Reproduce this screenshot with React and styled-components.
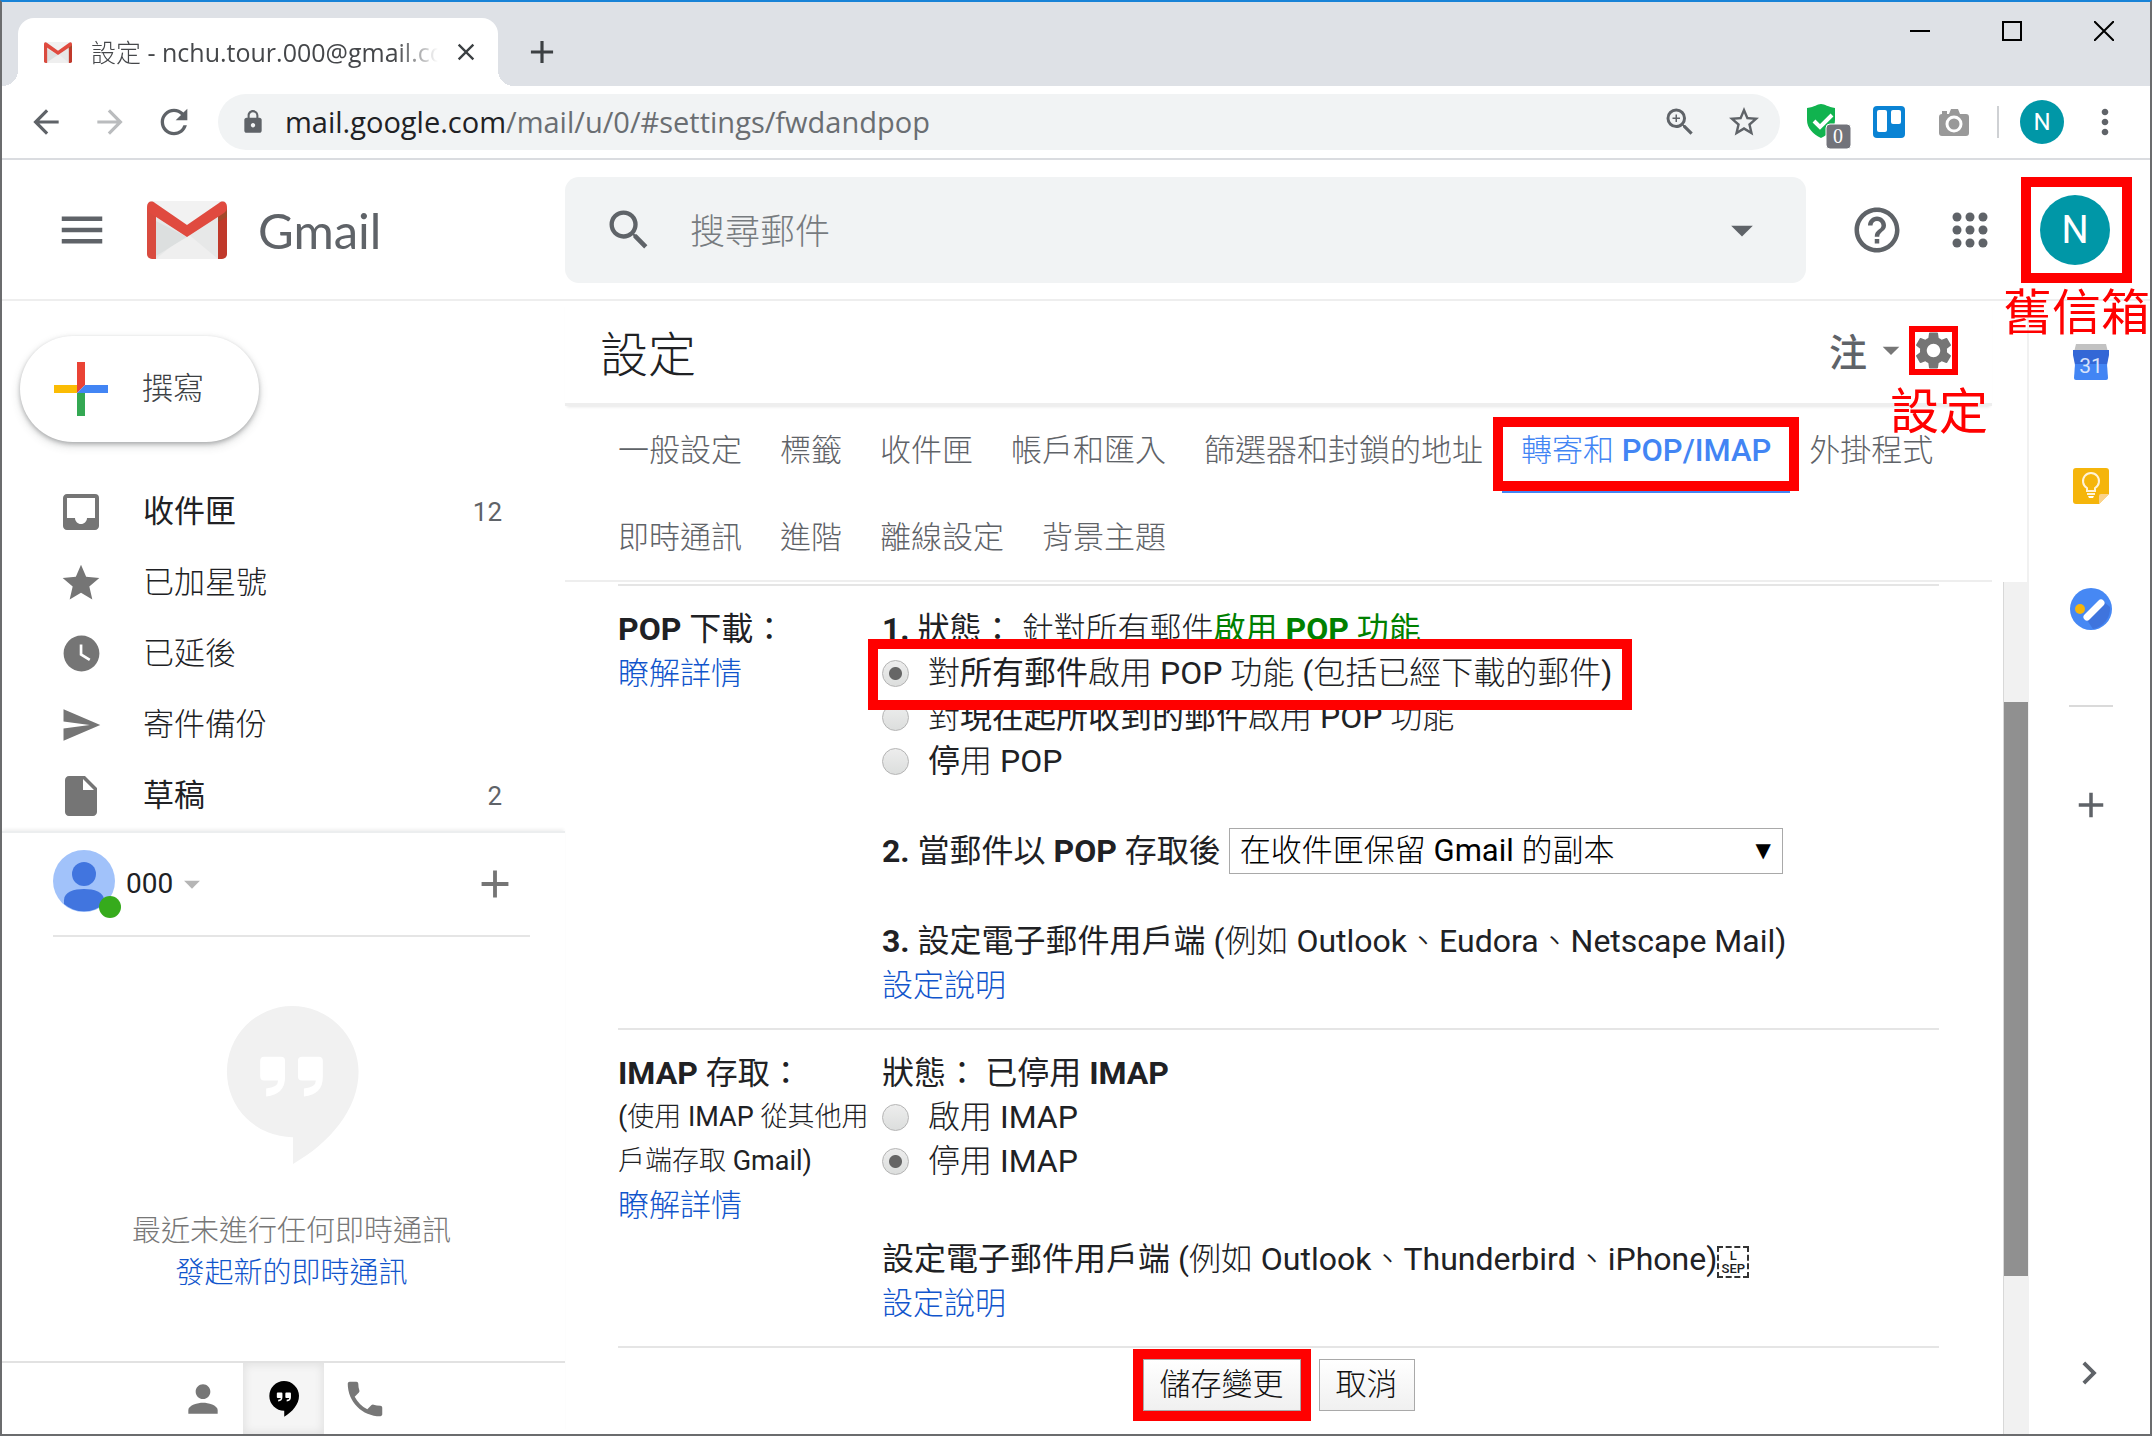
import React, { useState } from 'react';
import styled, { createGlobalStyle, css } from 'styled-components';
import {
  MdAdd,
  MdArrowBack,
  MdArrowDropDown,
  MdArrowForward,
  MdChevronRight,
  MdClose,
  MdHelpOutline,
  MdInbox,
  MdInsertDriveFile,
  MdLock,
  MdMenu,
  MdMoreVert,
  MdPerson,
  MdPhone,
  MdRefresh,
  MdSearch,
  MdSend,
  MdSettings,
  MdStar,
  MdStarBorder,
  MdWatchLater,
  MdZoomIn,
} from 'react-icons/md';

const CJK = "'Noto Sans CJK TC Light', 'Noto Sans CJK TC', sans-serif";

const GlobalStyle = createGlobalStyle`
  *, *::before, *::after {
    box-sizing: border-box;
  }

  body {
    margin: 0;
    background: #fff;
    color: #202124;
    font-family: Roboto, ${CJK};
    font-size: 31px;
    line-height: 44px;
  }

  button, input, select {
    font: inherit;
    color: inherit;
    margin: 0;
  }

  a {
    color: #1155cc;
    text-decoration: none;
  }

  svg {
    display: block;
    flex: none;
  }
`;

const Window = styled.div`
  display: flex;
  flex-direction: column;
  min-height: 100vh;
  border: 2px solid #6b6c6e;
  border-top-color: #1883d7;
  overflow: hidden;
`;

const PlainButton = styled.button`
  display: flex;
  align-items: center;
  justify-content: center;
  padding: 0;
  border: 0;
  background: none;
  color: #5f6368;
  cursor: pointer;
`;

/* ---------- browser ---------- */

const TabStrip = styled.div`
  display: flex;
  align-items: flex-end;
  height: 84px;
  padding-left: 16px;
  background: #dee1e6;
`;

const BrowserTab = styled.div`
  position: relative;
  display: flex;
  align-items: center;
  width: 480px;
  height: 68px;
  padding: 0 18px 0 26px;
  border-radius: 16px 16px 0 0;
  background: #fff;

  &::before,
  &::after {
    content: '';
    position: absolute;
    bottom: 0;
    width: 16px;
    height: 16px;
  }

  &::before {
    left: -16px;
    background: radial-gradient(circle at 0 0, transparent 16px, #fff 16px);
  }

  &::after {
    right: -16px;
    background: radial-gradient(circle at 100% 0, transparent 16px, #fff 16px);
  }
`;

const TabTitle = styled.span`
  flex: 1;
  margin: 0 14px 0 19px;
  overflow: hidden;
  white-space: nowrap;
  font-family: 'Open Sans', ${CJK};
  font-size: 25px;
  color: #45474a;
  mask-image: linear-gradient(90deg, #000 88%, transparent);
`;

const NewTab = styled(PlainButton)`
  width: 56px;
  height: 68px;
  margin-left: 16px;
  color: #3c4043;
`;

const WindowControls = styled.div`
  display: flex;
  align-self: flex-start;
  margin-left: auto;
`;

const WindowButton = styled(PlainButton)`
  width: 92px;
  height: 58px;
`;

const Toolbar = styled.div`
  display: flex;
  align-items: center;
  height: 74px;
  padding: 0 4px 0 12px;
  border-bottom: 2px solid #dadce0;
`;

const ToolButton = styled(PlainButton)`
  width: ${(props) => props.$width || 64}px;
  height: 56px;
  color: ${(props) => (props.$faded ? '#babcbe' : '#5f6368')};
`;

const Omnibox = styled.div`
  display: flex;
  flex: 1;
  align-items: center;
  height: 56px;
  margin: 0 11px 0 12px;
  padding: 0 4px 0 22px;
  border-radius: 28px;
  background: #f1f3f4;
  color: #5f6368;
`;

const Address = styled.span`
  flex: 1;
  margin-left: 19px;
  font-family: 'Open Sans', sans-serif;
  font-size: 29px;
  color: #6a6e72;

  b {
    font-weight: 400;
    color: #202124;
  }
`;

const ToolDivider = styled.span`
  width: 2px;
  height: 32px;
  margin: 0 21px 0 11px;
  background: #cfd1d4;
`;

const Avatar = styled.span`
  display: flex;
  align-items: center;
  justify-content: center;
  width: ${(props) => props.$size}px;
  height: ${(props) => props.$size}px;
  border-radius: 50%;
  background: #0097a7;
  color: #fff;
  font-size: ${(props) => (props.$size > 50 ? 38 : 24)}px;
`;

/* ---------- mail header ---------- */

const Header = styled.header`
  display: flex;
  align-items: center;
  height: 141px;
  border-bottom: 2px solid #eee;
`;

const Brand = styled.div`
  display: flex;
  align-items: center;
  width: 563px;
  padding-left: 50px;
`;

const BrandName = styled.span`
  margin-left: 31px;
  font-family: Lato, sans-serif;
  font-size: 49px;
  color: #5f6368;
`;

const MenuButton = styled(PlainButton)`
  width: 60px;
  height: 60px;
  margin-right: 35px;
`;

const Search = styled.form`
  display: flex;
  flex: 1;
  align-items: center;
  height: 106px;
  padding: 0 38px;
  border-radius: 14px;
  background: #f1f3f4;
`;

const SearchInput = styled.input`
  flex: 1;
  min-width: 0;
  margin-left: 35px;
  padding: 6px 0 0;
  border: 0;
  outline: 0;
  background: none;
  font-size: 35px;

  &::placeholder {
    color: #777b7f;
    opacity: 1;
  }
`;

const HeaderActions = styled.div`
  display: flex;
  align-items: center;
  gap: 48px;
  padding: 0 40px 0 44px;

  > :last-child {
    margin-left: 4px;
  }
`;

/* ---------- red call-outs ---------- */

const Marked = styled.div`
  position: relative;

  &::after {
    content: '';
    position: absolute;
    z-index: 2;
    inset: ${(props) => props.$inset};
    border: ${(props) => props.$line || 10}px solid #f00;
    pointer-events: none;
  }
`;

const MarkLabel = styled.span`
  position: absolute;
  z-index: 3;
  top: ${(props) => props.$top}px;
  right: ${(props) => props.$right}px;
  color: #f00;
  font-family: 'Noto Sans CJK TC', sans-serif;
  font-size: 49px;
  line-height: 50px;
  white-space: nowrap;
`;

/* ---------- sidebar ---------- */

const Body = styled.div`
  display: flex;
  flex: 1;
`;

const Sidebar = styled.aside`
  display: flex;
  flex-direction: column;
  width: 563px;
`;

const Compose = styled.button`
  display: flex;
  align-items: center;
  align-self: flex-start;
  gap: 34px;
  height: 106px;
  margin: 35px 0 34px 18px;
  padding: 0 55px 0 34px;
  border: 0;
  border-radius: 53px;
  background: #fff;
  color: #3c4043;
  box-shadow: 0 2px 4px rgba(60, 64, 67, 0.35), 0 4px 8px 1px rgba(60, 64, 67, 0.15);
`;

const FolderLink = styled.a`
  display: flex;
  align-items: center;
  height: 71px;
  padding: 0 63px 0 55px;
  color: #202124;
  font-family: Roboto, ${(props) => (props.$unread ? "'Noto Sans CJK TC', sans-serif" : CJK)};
`;

const FolderIcon = styled.span`
  display: flex;
  justify-content: center;
  width: 48px;
  margin-right: 38px;
  color: #757575;
`;

const FolderCount = styled.span`
  margin-left: auto;
  font-size: 26px;
  color: #5f6368;
`;

const Chat = styled.section`
  display: flex;
  flex: 1;
  flex-direction: column;
  border-top: 2px solid #eceeef;
  box-shadow: 0 -3px 3px -1px rgba(0, 0, 0, 0.06);
`;

const ChatHeader = styled.div`
  display: flex;
  align-items: center;
  height: 104px;
  margin: 0 35px 0 51px;
  padding-right: 12px;
  border-bottom: 2px solid #e5e5e5;
  font-size: 28px;
`;

const AddChat = styled(PlainButton)`
  margin-left: auto;
  color: #757575;
`;

const ChatAvatar = styled.span`
  position: relative;
  margin: 0 11px 6px 0;

  &::after {
    content: '';
    position: absolute;
    right: -6px;
    bottom: -6px;
    width: 22px;
    height: 22px;
    border-radius: 50%;
    background: #36ab1c;
  }
`;

const ChatEmpty = styled.div`
  display: flex;
  flex: 1;
  flex-direction: column;
  align-items: center;
  padding: 69px 0 0 16px;
  font-size: 29px;
  line-height: 42px;
  color: #777;

  svg {
    margin-bottom: 45px;
  }
`;

const ChatTabs = styled.div`
  display: flex;
  height: 73px;
  padding-left: 160px;
  border-top: 2px solid #e2e2e2;
`;

const ChatTab = styled(PlainButton)`
  width: 81px;
  color: #777;
  ${(props) =>
    props.$active &&
    css`
      background: #f5f5f5;
      box-shadow: inset 0 0 8px 2px rgba(0, 0, 0, 0.08);
      color: #000;
    `}
`;

/* ---------- settings ---------- */

const Main = styled.main`
  display: flex;
  flex: 1;
  flex-direction: column;
  min-width: 0;
`;

const MainTop = styled.div`
  padding-right: 35px;
  border-right: 2px solid #f1f1f1;
`;

const TitleBar = styled.div`
  display: flex;
  align-items: center;
  height: 105px;
  padding: 0 36px 4px 35px;
  border-bottom: 3px solid #eee;
  box-shadow: 0 3px 3px -2px rgba(0, 0, 0, 0.1);
`;

const Title = styled.h1`
  flex: 1;
  margin: 0;
  padding-top: 12px;
  font-size: 48px;
  font-weight: 400;
  line-height: 60px;
`;

const InputTool = styled(PlainButton)`
  font-family: 'Noto Sans CJK TC', sans-serif;
  font-size: 38px;
  font-weight: 500;

  svg {
    margin-left: 4px;
    color: #777;
  }
`;

const Tabs = styled.nav`
  display: flex;
  flex-wrap: wrap;
  padding-left: 34px;
  border-bottom: 2px solid #eee;
`;

const TabLink = styled.a`
  display: flex;
  align-items: center;
  height: 87px;
  padding: 6px 19px 0;
  border-bottom: 3px solid ${(props) => (props.$active ? '#4285f4' : 'transparent')};
  color: ${(props) => (props.$active ? '#4285f4' : '#5f6368')};
  font-weight: ${(props) => (props.$active ? 500 : 400)};
  white-space: pre;
`;

const Scroller = styled.div`
  display: flex;
  flex: 1;
`;

const ScrollTrack = styled.div`
  width: 26px;
  border-left: 1px solid #d8d8d8;
  background: #f1f1f1;
`;

const ScrollThumb = styled.div`
  width: 24px;
  height: 574px;
  margin-top: 120px;
  background: #909090;
`;

const Form = styled.form`
  flex: 1;
  padding: 2px 64px 0 53px;
  font-size: 32px;

  a {
    font-size: 31px;
  }
`;

const Section = styled.section`
  display: grid;
  grid-template-columns: 264px 1fr;
  padding: 21px 0 20px;
  border-top: 2px solid #e5e5e5;
`;

const Small = styled.div`
  font-size: 27px;
  white-space: nowrap;
`;

const Group = styled.div`
  margin-top: ${(props) => props.$gap || 0}px;
`;

const Strong = styled.strong`
  font-weight: 700;
  line-height: 1;
  color: ${(props) => props.color || 'inherit'};
`;

/* regular-weight Chinese beside the light default */
const Han = styled.span`
  font-family: 'Noto Sans CJK TC', sans-serif;
  font-weight: 400;
  line-height: 1;
`;

const RadioRow = styled.label`
  display: flex;
  align-items: center;
  height: 44px;
  white-space: pre;
`;

const Radio = styled.input`
  appearance: none;
  width: 27px;
  height: 27px;
  margin-right: 19px;
  border: 1px solid #b4b4b4;
  border-radius: 50%;
  background: linear-gradient(#ededed, #dcdedd);

  &:checked {
    background: radial-gradient(circle, #666 6px, transparent 7px), linear-gradient(#ededed, #dcdedd);
  }
`;

const SelectRow = styled.div`
  display: flex;
  align-items: center;
`;

const SelectBox = styled.div`
  position: relative;
  margin-left: 8px;

  &::after {
    content: '▼';
    position: absolute;
    top: 0;
    right: 12px;
    color: #000;
    font-family: 'DejaVu Sans', sans-serif;
    font-size: 20px;
    pointer-events: none;
  }
`;

const Select = styled.select`
  display: block;
  width: 554px;
  height: 46px;
  padding: 0 10px;
  border: 1px solid #a9a9a9;
  border-radius: 0;
  appearance: none;
  background: #fff;
  color: #000;
  font-size: 31px;
`;

const LineSeparator = styled.span`
  display: inline-flex;
  flex-direction: column;
  align-items: center;
  justify-content: center;
  width: 32px;
  height: 32px;
  border: 2px dashed #333;
  font-size: 13px;
  font-weight: 500;
  line-height: 13px;
  vertical-align: middle;
`;

const Actions = styled.div`
  display: flex;
  justify-content: center;
  gap: 18px;
  padding: 11px 0 22px;
  border-top: 2px solid #e5e5e5;
`;

const FormButton = styled.button`
  height: 52px;
  padding: 0 16px;
  border: 1px solid #a9a9a9;
  background: linear-gradient(#fff, #f0f0f0);
  color: #111;
  font-size: 31px;
`;

/* ---------- side panel ---------- */

const SidePanel = styled.aside`
  display: flex;
  flex-direction: column;
  align-items: center;
  width: 121px;
  padding-left: 2px;
`;

const AddOn = styled(PlainButton)`
  width: 100%;
  height: 123px;
`;

const PanelDivider = styled.hr`
  width: 44px;
  height: 2px;
  margin: 35px 0 36px;
  border: 0;
  background: #dadada;
`;

const PanelToggle = styled(AddOn)`
  margin-top: auto;
  padding-right: 4px;
`;

/* ---------- drawings ---------- */

const GmailLogo = ({ width, height }) => (
  <svg width={width} height={height} viewBox="0 0 80 58" preserveAspectRatio="none">
    <rect width="80" height="58" rx="5" fill="#e7e8e8" />
    <path d="M9 58 40 32 71 58z" fill="#efefef" />
    <path d="M9 20 40 36 30 42 9 55z" fill="#dcdfdf" />
    <path d="M5 0h70L40 24z" fill="#f2f2f2" />
    <path d="M0 6 9 13v45H5a5 5 0 0 1-5-5z" fill="#d94b3f" />
    <path d="M80 6 71 13v45h4a5 5 0 0 0 5-5z" fill="#c0392b" />
    <path d="M71 14 80 7v9l-9 5z" fill="#a4492a" />
    <path d="M0 6C0 1 4-1 8 2l32 22L72 2c4-3 8-1 8 4 0 3-1 4-3 6L40 36 3 12C1 10 0 9 0 6z" fill="#e04a3f" />
  </svg>
);

const ComposePlus = () => (
  <svg width="54" height="54" viewBox="0 0 54 54">
    <path d="M23 0h8v23l-8 8z" fill="#ea4335" />
    <path d="M0 23h23v8H0z" fill="#fbbc04" />
    <path d="M31 23h23v8H23z" fill="#4285f4" />
    <path d="M23 31h8v23h-8z" fill="#34a853" />
  </svg>
);

const Hangouts = ({ size, bubble, quote }) => (
  <svg width={size} height={Math.round(size * 1.19)} viewBox="0 0 134 160">
    <path d="M67 0a67 67 0 0 1 67 66c0 38-29 72-66 93v-27A66 66 0 0 1 67 0z" fill={bubble} />
    <path
      d="M39 51h17q4 0 4 4v17q0 17-19 19v-8q12-1 12-8H39q-4 0-4-4V55q0-4 4-4zM77 51h17q4 0 4 4v17q0 17-19 19v-8q12-1 12-8H77q-4 0-4-4V55q0-4 4-4z"
      fill={quote}
    />
  </svg>
);

const Shield = () => (
  <svg width="54" height="54" viewBox="-6 -4 54 54">
    <path d="M4 9C12 8 14 5 18 5s7 3 14 4v12c0 8-6 14-14 18C10 35 4 29 4 21z" fill="#11b34f" />
    <path d="m11 22 6 6 12-12" fill="none" stroke="#fff" strokeWidth="4" />
    <rect x="23" y="25" width="25" height="25" rx="4" fill="#72737a" stroke="#fff" strokeWidth="1" />
    <text x="35" y="44" fill="#fff" fontFamily="Liberation Serif, serif" fontSize="20" textAnchor="middle">
      0
    </text>
  </svg>
);

const Trello = () => (
  <svg width="32" height="32" viewBox="0 0 32 32">
    <rect width="32" height="32" rx="4" fill="#0a83d4" />
    <rect x="4" y="4" width="10" height="22" rx="2" fill="#fff" />
    <rect x="18" y="4" width="10" height="14" rx="2" fill="#fff" />
  </svg>
);

const Camera = () => (
  <svg width="30" height="28" viewBox="0 0 30 28">
    <path d="M3 6V3h5v3h2l2-5h7l2 5h6q3 0 3 3v16q0 3-3 3H3q-3 0-3-3V9q0-3 3-3z" fill="#999" />
    <circle cx="15" cy="16" r="7" fill="none" stroke="#fff" strokeWidth="3" />
  </svg>
);

const AppsGrid = () => (
  <svg width="36" height="36" viewBox="0 0 36 36" fill="currentColor">
    {[5, 18, 31].map((y) => [5, 18, 31].map((x) => <circle key={`${x}-${y}`} cx={x} cy={y} r="4.5" />))}
  </svg>
);

const Person = () => (
  <svg width="62" height="62" viewBox="0 0 62 62">
    <circle cx="31" cy="31" r="31" fill="#a1c2fa" />
    <circle cx="31" cy="24" r="12" fill="#4175df" />
    <path d="M11 54V50c0-8 10-11 20-11s20 3 20 11v4a31 31 0 0 1-40 0z" fill="#4175df" />
  </svg>
);

const Calendar = () => (
  <svg width="36" height="37" viewBox="0 0 36 37">
    <path d="M3 0h30l2 8H1z" fill="#c2c2c2" />
    <path d="M0 6h36v5l-2 10H2L0 11z" fill="#3367d6" />
    <path d="M2 20h32l1 14q0 2-2 2H3q-2 0-2-2z" fill="#4285f4" />
    <text x="18" y="29" fill="#d7e3fb" fontFamily="Roboto, sans-serif" fontSize="21" textAnchor="middle">
      31
    </text>
  </svg>
);

const Keep = () => (
  <svg width="36" height="36" viewBox="0 0 36 36">
    <path d="M3 0h30q3 0 3 3v23L26 36H3q-3 0-3-3V3q0-3 3-3z" fill="#f5b50b" />
    <path d="M26 36V28q0-2 2-2h8z" fill="#fbd28b" />
    <path d="M14 23v-3a8 8 0 1 1 8 0v3zM14 26h8" fill="none" stroke="#fff3d6" strokeWidth="2" />
    <path d="M15 28h6l-1 2h-4z" fill="#fff" />
  </svg>
);

const Tasks = () => (
  <svg width="42" height="42" viewBox="0 0 42 42">
    <circle cx="21" cy="21" r="21" fill="#4688f4" />
    <path d="m17 32 17-18 6 5a21 21 0 0 1-17 22z" fill="#3f74dd" />
    <path d="m17 29 14-14" stroke="#fff" strokeWidth="7" strokeLinecap="round" />
    <circle cx="10" cy="21" r="5" fill="#f5b50b" />
  </svg>
);

const MinimizeIcon = () => (
  <svg width="20" height="20" viewBox="0 0 20 20" fill="none" stroke="#000" strokeWidth="2">
    <path d="M0 10h20" />
  </svg>
);

const MaximizeIcon = () => (
  <svg width="20" height="20" viewBox="0 0 20 20" fill="none" stroke="#000" strokeWidth="2">
    <path d="M1 1h18v18H1z" />
  </svg>
);

const CloseIcon = () => (
  <svg width="20" height="20" viewBox="0 0 20 20" fill="none" stroke="#000" strokeWidth="2">
    <path d="m0 0 20 20M20 0 0 20" />
  </svg>
);

/* ---------- data ---------- */

const folders = [
  { label: '收件匣', icon: <MdInbox size={48} />, count: 12 },
  { label: '已加星號', icon: <MdStar size={44} /> },
  { label: '已延後', icon: <MdWatchLater size={43} /> },
  { label: '寄件備份', icon: <MdSend size={42} /> },
  { label: '草稿', icon: <MdInsertDriveFile size={48} />, count: 2 },
];

const tabsBefore = ['一般設定', '標籤', '收件匣', '帳戶和匯入', '篩選器和封鎖的地址'];
const tabsAfter = ['外掛程式', '即時通訊', '進階', '離線設定', '背景主題'];

const BrowserChrome = () => (
  <>
    <TabStrip>
      <BrowserTab>
        <GmailLogo width={28} height={21} />
        <TabTitle>設定 - nchu.tour.000@gmail.com</TabTitle>
        <PlainButton aria-label="關閉分頁">
          <MdClose size={28} color="#3c4043" />
        </PlainButton>
      </BrowserTab>
      <NewTab aria-label="新分頁">
        <MdAdd size={38} />
      </NewTab>
      <WindowControls>
        <WindowButton aria-label="最小化"><MinimizeIcon /></WindowButton>
        <WindowButton aria-label="最大化"><MaximizeIcon /></WindowButton>
        <WindowButton aria-label="關閉"><CloseIcon /></WindowButton>
      </WindowControls>
    </TabStrip>
    <Toolbar>
      <ToolButton aria-label="上一頁"><MdArrowBack size={38} /></ToolButton>
      <ToolButton aria-label="下一頁" $faded><MdArrowForward size={38} /></ToolButton>
      <ToolButton aria-label="重新載入"><MdRefresh size={40} /></ToolButton>
      <Omnibox>
        <MdLock size={26} />
        <Address>
          <b>mail.google.com</b>/mail/u/0/#settings/fwdandpop
        </Address>
        <ToolButton aria-label="縮放"><MdZoomIn size={36} /></ToolButton>
        <ToolButton aria-label="加入書籤"><MdStarBorder size={36} /></ToolButton>
      </Omnibox>
      <ToolButton $width={65} aria-label="安全防護"><Shield /></ToolButton>
      <ToolButton $width={65} aria-label="Trello"><Trello /></ToolButton>
      <ToolButton $width={65} aria-label="擷取畫面"><Camera /></ToolButton>
      <ToolDivider />
      <Avatar $size={44}>N</Avatar>
      <ToolButton $width={82} aria-label="選單"><MdMoreVert size={40} /></ToolButton>
    </Toolbar>
  </>
);

const MailHeader = () => (
  <Header>
    <Brand>
      <MenuButton aria-label="主選單"><MdMenu size={54} /></MenuButton>
      <GmailLogo width={80} height={58} />
      <BrandName>Gmail</BrandName>
    </Brand>
    <Search>
      <MdSearch size={52} color="#5f6368" />
      <SearchInput aria-label="搜尋郵件" placeholder="搜尋郵件" />
      <MdArrowDropDown size={52} color="#5f6368" />
    </Search>
    <HeaderActions>
      <PlainButton aria-label="說明"><MdHelpOutline size={54} /></PlainButton>
      <PlainButton aria-label="應用程式"><AppsGrid /></PlainButton>
      <Marked $inset="-18px -22px -18px -19px">
        <Avatar $size={70}>N</Avatar>
        <MarkLabel $top={89} $right={-40}>舊信箱</MarkLabel>
      </Marked>
    </HeaderActions>
  </Header>
);

const MailSidebar = () => (
  <Sidebar>
    <Compose>
      <ComposePlus />
      撰寫
    </Compose>
    <nav>
      {folders.map(({ label, icon, count }) => (
        <FolderLink key={label} href="#" $unread={Boolean(count)}>
          <FolderIcon>{icon}</FolderIcon>
          {label}
          {count && <FolderCount>{count}</FolderCount>}
        </FolderLink>
      ))}
    </nav>
    <Chat>
      <ChatHeader>
        <ChatAvatar><Person /></ChatAvatar>
        000
        <MdArrowDropDown size={38} color="#b5b5b5" />
        <AddChat aria-label="新增對話">
          <MdAdd size={46} />
        </AddChat>
      </ChatHeader>
      <ChatEmpty>
        <Hangouts size={134} bubble="#f1f1f1" quote="#fff" />
        <span>最近未進行任何即時通訊</span>
        <a href="#">發起新的即時通訊</a>
      </ChatEmpty>
      <ChatTabs>
        <ChatTab aria-label="聯絡人"><MdPerson size={44} /></ChatTab>
        <ChatTab aria-label="對話" $active><Hangouts size={30} bubble="#000" quote="#fff" /></ChatTab>
        <ChatTab aria-label="電話"><MdPhone size={46} /></ChatTab>
      </ChatTabs>
    </Chat>
  </Sidebar>
);

const SettingsForm = () => {
  const [pop, setPop] = useState('all');
  const [imap, setImap] = useState('off');

  return (
    <Form>
      <Section>
        <div>
          <Strong>POP <Han>下載：</Han></Strong>
          <div><a href="#">瞭解詳情</a></div>
        </div>
        <div>
          <div>
            <Strong>1. <Han>狀態：</Han></Strong> 針對所有郵件
            <Strong color="#008000"><Han>啟用</Han> POP <Han>功能</Han></Strong>
          </div>
          <Marked $inset="-12px 307px -15px -14px">
            <RadioRow>
              <Radio type="radio" name="pop" checked={pop === 'all'} onChange={() => setPop('all')} />
              <span>對<Han>所有郵件</Han>啟用 POP 功能 (包括已經下載的郵件)</span>
            </RadioRow>
          </Marked>
          <RadioRow>
            <Radio type="radio" name="pop" checked={pop === 'new'} onChange={() => setPop('new')} />
            <span>對<Han>現在起所收到的郵件</Han>啟用 POP 功能</span>
          </RadioRow>
          <RadioRow>
            <Radio type="radio" name="pop" checked={pop === 'off'} onChange={() => setPop('off')} />
            <span><Han>停</Han>用 POP</span>
          </RadioRow>
          <Group $gap={45}>
            <SelectRow>
              <label htmlFor="popAction">
                <Strong>2. <Han>當郵件以</Han> POP <Han>存取後</Han></Strong>
              </label>
              <SelectBox>
                <Select id="popAction">
                  <option>在收件匣保留 Gmail 的副本</option>
                </Select>
              </SelectBox>
            </SelectRow>
          </Group>
          <Group $gap={45}>
            <Strong>3. <Han>設定電子郵件用戶端</Han></Strong> (例如 Outlook、Eudora、Netscape Mail)
            <div><a href="#">設定說明</a></div>
          </Group>
        </div>
      </Section>
      <Section>
        <div>
          <Strong>IMAP <Han>存取：</Han></Strong>
          <Small>(使用 IMAP 從其他用<br />戶端存取 Gmail)</Small>
          <div><a href="#">瞭解詳情</a></div>
        </div>
        <div>
          <Strong><Han>狀態： 已停用</Han> IMAP</Strong>
          <RadioRow>
            <Radio type="radio" name="imap" checked={imap === 'on'} onChange={() => setImap('on')} />
            <span>啟用 IMAP</span>
          </RadioRow>
          <RadioRow>
            <Radio type="radio" name="imap" checked={imap === 'off'} onChange={() => setImap('off')} />
            <span>停用 IMAP</span>
          </RadioRow>
          <Group $gap={54}>
            <Han>設定電子郵件用戶端</Han> (例如 Outlook、Thunderbird、iPhone)
            <LineSeparator><span>L</span><span>SEP</span></LineSeparator>
            <div><a href="#">設定說明</a></div>
          </Group>
        </div>
      </Section>
      <Actions>
        <Marked $inset="-10px">
          <FormButton type="button">儲存變更</FormButton>
        </Marked>
        <FormButton type="button">取消</FormButton>
      </Actions>
    </Form>
  );
};

const Settings = () => (
  <Main>
    <MainTop>
      <TitleBar>
        <Title>設定</Title>
        <InputTool>
          注
          <MdArrowDropDown size={40} />
        </InputTool>
        <Marked $inset="-2px" $line={6}>
          <PlainButton aria-label="設定"><MdSettings size={45} color="#757575" /></PlainButton>
          <MarkLabel $top={55} $right={-32}>設定</MarkLabel>
        </Marked>
      </TitleBar>
      <Tabs>
        {tabsBefore.map((tab) => (
          <TabLink key={tab} href="#">{tab}</TabLink>
        ))}
        <Marked $inset="11px -9px 2px -9px">
          <TabLink href="#" $active>轉寄和 POP/IMAP</TabLink>
        </Marked>
        {tabsAfter.map((tab) => (
          <TabLink key={tab} href="#">{tab}</TabLink>
        ))}
      </Tabs>
    </MainTop>
    <Scroller>
      <SettingsForm />
      <ScrollTrack>
        <ScrollThumb />
      </ScrollTrack>
    </Scroller>
  </Main>
);

const App = () => (
  <Window>
    <GlobalStyle />
    <BrowserChrome />
    <MailHeader />
    <Body>
      <MailSidebar />
      <Settings />
      <SidePanel>
        <AddOn aria-label="日曆"><Calendar /></AddOn>
        <AddOn aria-label="Keep"><Keep /></AddOn>
        <AddOn aria-label="Tasks"><Tasks /></AddOn>
        <PanelDivider />
        <AddOn aria-label="取得外掛程式"><MdAdd size={42} /></AddOn>
        <PanelToggle aria-label="隱藏側邊面板"><MdChevronRight size={46} /></PanelToggle>
      </SidePanel>
    </Body>
  </Window>
);

export default App;
